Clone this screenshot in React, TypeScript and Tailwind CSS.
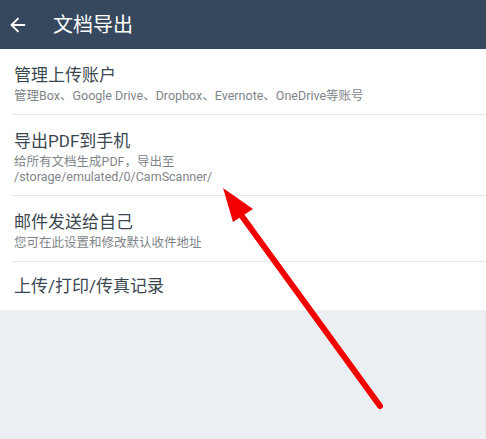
import { ArrowLeft } from "lucide-react";

const rows = [
  {
    title: "管理上传账户",
    sub: ["管理Box、Google Drive、Dropbox、Evernote、OneDrive等账号"],
  },
  {
    title: "导出PDF到手机",
    sub: ["给所有文档生成PDF，导出至", "/storage/emulated/0/CamScanner/"],
  },
  {
    title: "邮件发送给自己",
    sub: ["您可在此设置和修改默认收件地址"],
  },
  { title: "上传/打印/传真记录", sub: [] },
];

export default function App() {
  return (
    <div
      className="relative w-[486px] h-[439px] bg-[#eceff1] overflow-hidden"
      style={{ fontFamily: "Roboto, 'Noto Sans CJK SC', sans-serif" }}
    >
      <header className="h-[49px] bg-[#35485e] flex items-center text-white">
        <ArrowLeft className="ml-[7px] w-[22px] h-[22px]" strokeWidth={2} />
        <h1 className="ml-[24px] text-[20px] leading-none">文档导出</h1>
      </header>
      <ul className="bg-white">
        {rows.map((r, i) => (
          <li key={r.title} className="pl-[13px]">
            <div
              className={`pl-px ${r.sub.length ? "pt-[15px] pb-[11px]" : "pt-[13px] pb-[13px]"}`}
            >
              <div className="text-[17px] leading-[22px] text-[#3a4750]">{r.title}</div>
              {r.sub.length > 0 && (
                <div className="mt-[2px] text-[12.5px] leading-[15px] text-[#80858a]">
                  {r.sub.map((s) => (
                    <div key={s}>{s}</div>
                  ))}
                </div>
              )}
            </div>
            {i < rows.length - 1 && <div className="h-px bg-[#e3e5e7]" />}
          </li>
        ))}
      </ul>
      <svg
        className="absolute left-0 top-0 pointer-events-none"
        width="486"
        height="439"
        viewBox="0 0 486 439"
      >
        <line x1="380" y1="406" x2="236" y2="208" stroke="#f20000" strokeWidth="6" strokeLinecap="round" />
        <polygon points="223,188 253,209 233,222" fill="#f20000" />
      </svg>
    </div>
  );
}
